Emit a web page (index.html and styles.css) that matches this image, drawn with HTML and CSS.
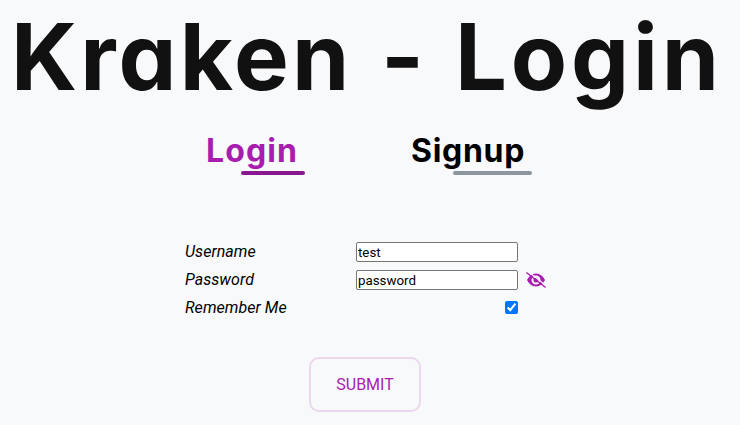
FILE: index.html
```html
<!DOCTYPE html>
<html lang="en">
<head>
<meta charset="utf-8">
<title>Kraken - Login</title>
<link rel="stylesheet" href="styles.css">
</head>
<body>
<h1 class="title"><span class="name">Kraken</span> <span class="dash">-</span> <span class="page">Login</span></h1>
<nav class="tabs">
  <a class="tab active"><span class="label">Login</span><span class="bar"></span></a>
  <a class="tab signup"><span class="label">Signup</span><span class="bar"></span></a>
</nav>
<form class="form">
  <label class="row"><span class="caption">Username</span><input class="field" type="text" value="test"></label>
  <label class="row"><span class="caption">Password</span><input class="field" type="text" value="password">
    <svg class="eye" viewBox="0 0 20 16">
      <path fill-rule="evenodd" d="M1 8C3 3.700 6.100 1.500 10 1.500S17 3.700 19 8c-2 4.300-5.100 6.500-9 6.500S3 12.300 1 8ZM10 3.500a4.500 4.500 0 1 0 0 9 4.500 4.500 0 0 0 0-9ZM10 5.500a2.500 2.500 0 1 1 0 5 2.500 2.500 0 0 1 0-5Z"/>
      <path class="gap" d="M1.600-.8 20.400 13.900"/>
      <path class="slash" d="M.4.500 19.600 15.500"/>
    </svg>
  </label>
  <label class="row"><span class="caption">Remember Me</span><input class="check" type="checkbox" checked></label>
  <button class="submit" type="button">SUBMIT</button>
</form>
</body>
</html>
```
FILE: styles.css
```css
body {
  margin: 0;
  height: 425px;
  overflow: hidden;
  background: #f8f9fb;
  font-family: Roboto, sans-serif;
  color: #000;
}
.title, .label {
  font-family: Inter, sans-serif;
  font-feature-settings: "cv11" 1;
  font-weight: 700;
}
.title {
  display: flex;
  height: 120px;
  margin: 0;
  padding-left: 11px;
  font-size: 92px;
  line-height: 114px;
  color: #111;
  white-space: nowrap;
}
.name { width: 370px; letter-spacing: 3.1px; }
.dash { width: 74px; }
.page { letter-spacing: 3.8px; }
.tabs {
  display: flex;
  height: 122px;
  padding-left: 206px;
}
.tab {
  display: flex;
  flex-direction: column;
  width: 205px;
}
.label {
  height: 51px;
  font-size: 32px;
  line-height: 62px;
  letter-spacing: 1.1px;
}
.bar {
  z-index: 1;
  width: 64px;
  height: 4px;
  margin-left: 35px;
  border-radius: 2px;
  background: #89188f;
}
.active { color: #a81caf; }
.signup .label { letter-spacing: .7px; }
.signup .bar {
  width: 79px;
  margin-left: 42px;
  background: #8d969e;
}
.form {
  display: flex;
  flex-direction: column;
  gap: 8px;
  padding-left: 185px;
}
.row {
  display: flex;
  align-items: center;
  height: 20px;
}
.caption {
  width: 171px;
  padding-bottom: 2px;
  font-size: 16px;
  font-style: italic;
  letter-spacing: .05px;
}
.field {
  box-sizing: border-box;
  width: 162px;
  height: 20px;
  margin: 0;
  padding: 1px;
  border: 1px solid #767676;
  border-radius: 2px;
  background: #fff;
  font: 13.333px Roboto, sans-serif;
  color: #000;
}
.eye {
  width: 20px;
  height: 16px;
  margin-left: 8px;
  fill: #a81caf;
}
.gap { stroke: #f8f9fb; stroke-width: 1.200; }
.slash { stroke: #a81caf; stroke-width: 1.300; }
.check {
  width: 13px;
  height: 13px;
  margin: 0 0 1px 149px;
}
.submit {
  width: 112px;
  height: 55px;
  margin: 31px 0 0 124px;
  padding: 0;
  border: 2px solid #ecd7ef;
  border-radius: 10px;
  background: transparent;
  font: 16px Roboto, sans-serif;
  color: #a81caf;
}
```
